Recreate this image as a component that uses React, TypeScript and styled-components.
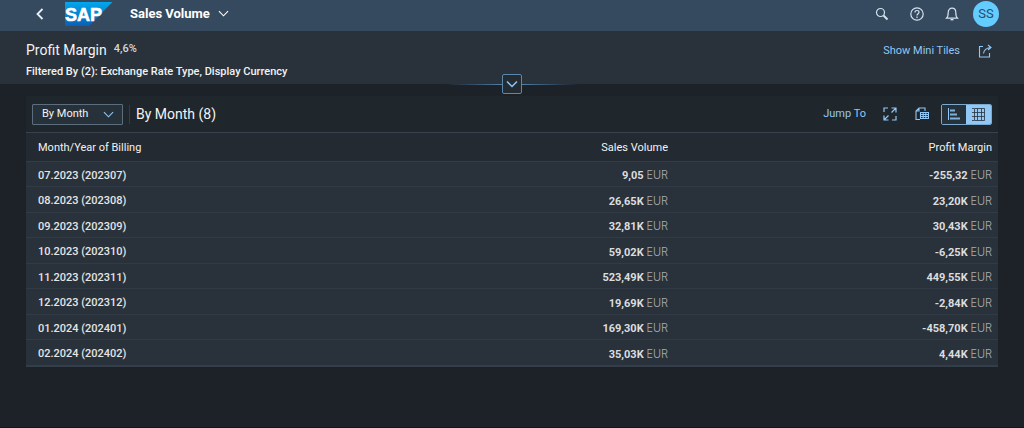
import React from 'react';
import styled, { createGlobalStyle } from 'styled-components';

const GlobalStyle = createGlobalStyle`
  *, *::before, *::after { box-sizing: border-box; }
  body {
    margin: 0;
    background: #1d2229;
    color: #f2f3f4;
    font-family: Roboto, "Liberation Sans", sans-serif;
    font-size: 11px;
    line-height: 16px;
  }
  button, select { font: inherit; color: inherit; margin: 0; padding: 0; border: 0; background: none; cursor: pointer; }
  svg { display: block; }
`;

const Page = styled.div`
  display: flex;
  flex-direction: column;
  min-height: 100vh;
  border-bottom: 1px solid #1b1218;
`;

const ShellBar = styled.header`
  display: flex;
  align-items: center;
  justify-content: space-between;
  height: 31px;
  padding: 0 25px 4px 32px;
  background: #354a5f;
`;

const ShellGroup = styled.div<{ $gap: number }>`
  display: flex;
  align-items: center;
  gap: ${(p) => p.$gap}px;
`;

const IconButton = styled.button<{ $color?: string }>`
  display: grid;
  place-items: center;
  width: 16px;
  height: 16px;
  color: ${(p) => p.$color ?? '#91c8f6'};
`;

const AppTitle = styled.button`
  display: flex;
  align-items: center;
  gap: 8px;
  font-size: 13px;
  font-weight: 700;
  color: #ffffff;
`;

const Avatar = styled.button`
  width: 26px;
  height: 26px;
  border-radius: 50%;
  background: #64cdff;
  color: #2c4a66;
  font-size: 13px;
`;

const PageHeader = styled.section`
  display: flex;
  align-items: flex-start;
  justify-content: space-between;
  height: 53px;
  padding: 10px 31px 0 26px;
  background: #29313a;
`;

const Heading = styled.h1`
  display: flex;
  gap: 7px;
  margin: 0;
  font-size: 14px;
  font-weight: 400;
  line-height: 18px;
`;

const Kpi = styled.span`
  font-size: 11px;
  font-weight: 500;
  line-height: 16px;
  color: #d5d7d9;
`;

const FilterText = styled.p`
  margin: 5px 0 0;
  font-weight: 500;
`;

const HeaderActions = styled.div`
  display: flex;
  align-items: center;
  gap: 17px;
  padding-top: 2px;
`;

const LinkButton = styled.button`
  color: #91c8f6;
`;

const ExpandStrip = styled.div`
  display: flex;
  align-items: center;
  justify-content: center;
  height: 20px;
  margin-top: -10px;
`;

const Glow = styled.span<{ $side: 'left' | 'right' }>`
  width: 56px;
  height: 1px;
  background: linear-gradient(to ${(p) => p.$side}, #4f7fa8, transparent);
`;

const ExpandButton = styled.button`
  display: grid;
  place-items: center;
  width: 20px;
  height: 20px;
  border: 1px solid #5b87ad;
  border-radius: 2px;
  background: #232b33;
  color: #91c8f6;
`;

const Panel = styled.main`
  margin: 2px 26px 0;
  background: #1f262c;
`;

const Toolbar = styled.div`
  display: flex;
  align-items: center;
  justify-content: space-between;
  height: 36px;
  padding: 0 6px;
`;

const ToolGroup = styled.div<{ $gap: number }>`
  display: flex;
  align-items: center;
  gap: ${(p) => p.$gap}px;
`;

const SelectBox = styled.label`
  display: grid;
  align-items: center;
  width: 91px;
  height: 21px;
  border: 1px solid #5c6d7e;
  border-radius: 1px;
  background: #27313a;
  color: #91c8f6;

  > * { grid-area: 1 / 1; }
  > svg { justify-self: end; margin-right: 8px; pointer-events: none; }
`;

const Select = styled.select`
  appearance: none;
  width: 100%;
  height: 19px;
  padding: 0 24px 0 9px;
  color: #f2f3f4;
`;

const Divider = styled.span`
  width: 1px;
  height: 19px;
  background: #343e49;
`;

const PanelTitle = styled.h2`
  margin: 0;
  font-size: 14px;
  font-weight: 400;
`;

const Segments = styled.div`
  display: flex;
  height: 21px;
  border: 1px solid #7ba9d0;
  border-radius: 2px;
  overflow: hidden;
`;

const Segment = styled.button<{ $active?: boolean }>`
  display: grid;
  place-items: center;
  width: ${(p) => (p.$active ? 25 : 24)}px;
  background: ${(p) => (p.$active ? '#91c8f6' : '#27313a')};
  color: ${(p) => (p.$active ? '#29313a' : '#91c8f6')};
`;

const Table = styled.table`
  width: 100%;
  height: 235px;
  border-collapse: separate;
  border-spacing: 0;
  table-layout: fixed;
  border-top: 1px solid #38424d;
  border-bottom: 2px solid #343e4a;
`;

const HeadCell = styled.th<{ $end?: boolean }>`
  height: 29px;
  padding: 1px 6px 0 12px;
  background: #232a31;
  border-bottom: 1px solid #323b46;
  font-weight: 400;
  text-align: ${(p) => (p.$end ? 'right' : 'left')};
`;

const Cell = styled.td<{ $end?: boolean }>`
  padding: 3px 6px 0 12px;
  background: #29313a;
  color: #e4e5e6;
  font-weight: 500;
  text-align: ${(p) => (p.$end ? 'right' : 'left')};

  tr + tr > & { border-top: 1px solid #313a45; }
`;

const Amount = styled.span`
  font-weight: 700;
  color: #dcdddf;
`;

const Unit = styled.span`
  font-family: Inter, Roboto, sans-serif;
  font-weight: 300;
  color: #a9aeb3;
`;

const ROWS: [string, string, string][] = [
  ['07.2023 (202307)', '9,05', '-255,32'],
  ['08.2023 (202308)', '26,65K', '23,20K'],
  ['09.2023 (202309)', '32,81K', '30,43K'],
  ['10.2023 (202310)', '59,02K', '-6,25K'],
  ['11.2023 (202311)', '523,49K', '449,55K'],
  ['12.2023 (202312)', '19,69K', '-2,84K'],
  ['01.2024 (202401)', '169,30K', '-458,70K'],
  ['02.2024 (202402)', '35,03K', '4,44K'],
];

const Chevron = ({ width = 11, stroke = 1.2 }: { width?: number; stroke?: number }) => (
  <svg width={width} height={width} viewBox="0 0 12 12" fill="none" stroke="currentColor" strokeWidth={stroke}>
    <path d="M1 3.5 6 8.5 11 3.5" />
  </svg>
);

const SapLogo = () => (
  <svg width="48" height="24" viewBox="0 0 48 24" role="img" aria-label="SAP">
    <defs>
      <linearGradient id="sap-blue" x1="0" y1="0" x2="0" y2="1">
        <stop offset="0" stopColor="#00a8ec" />
        <stop offset="1" stopColor="#0b5fb8" />
      </linearGradient>
    </defs>
    <path d="M0 0H47.5L24 24H0Z" fill="url(#sap-blue)" />
    <text x="0" y="18.5" fill="#fff" fontFamily="Liberation Sans, sans-serif" fontWeight="700" fontSize="18" stroke="#fff" strokeWidth="0.6">
      SAP
    </text>
  </svg>
);

const Value = ({ amount }: { amount: string }) => (
  <>
    <Amount>{amount}</Amount> <Unit>EUR</Unit>
  </>
);

export default function App() {
  return (
    <>
      <GlobalStyle />
      <Page>
        <ShellBar>
          <ShellGroup $gap={17}>
            <IconButton aria-label="Back" $color="#e6f1fa">
              <svg width="16" height="16" viewBox="0 0 16 16" fill="none" stroke="currentColor" strokeWidth="1.8">
                <path d="M10.5 3 5.5 8l5 5" />
              </svg>
            </IconButton>
            <SapLogo />
            <AppTitle>
              Sales Volume
              <Chevron />
            </AppTitle>
          </ShellGroup>
          <ShellGroup $gap={13}>
            <ShellGroup $gap={19}>
              <IconButton aria-label="Search" $color="#d3e2ee">
                <svg width="14" height="14" viewBox="0 0 14 14" fill="none" stroke="currentColor">
                  <circle cx="5.5" cy="5.5" r="4" strokeWidth="1.2" />
                  <path d="m8.5 8.5 4 4" strokeWidth="2" />
                </svg>
              </IconButton>
              <IconButton aria-label="Help" $color="#d3e2ee">
                <svg width="14" height="14" viewBox="0 0 14 14" fill="none" stroke="currentColor" strokeWidth="1.2">
                  <circle cx="7" cy="7" r="6.2" />
                  <path d="M5 5.5C5 4.2 5.9 3.5 7 3.5S9 4.2 9 5.3C9 6.7 7 6.7 7 8.5M7 9.6v1.3" />
                </svg>
              </IconButton>
              <IconButton aria-label="Notifications" $color="#d3e2ee">
                <svg width="14" height="14" viewBox="0 0 14 14" fill="none" stroke="currentColor" strokeWidth="1.2">
                  <path d="M1.5 11.2C3.2 9.8 3.2 8.5 3.2 5.500 3.2 2.8 4.8 1.2 7 1.2s3.8 1.6 3.8 4.3c0 3 0 4.3 1.7 5.7Z" />
                  <path d="M5.500 12.700h3" strokeWidth="1.4" />
                </svg>
              </IconButton>
            </ShellGroup>
            <Avatar aria-label="User menu SS">SS</Avatar>
          </ShellGroup>
        </ShellBar>

        <PageHeader>
          <div>
            <Heading>
              Profit Margin <Kpi>4,6%</Kpi>
            </Heading>
            <FilterText>Filtered By (2): Exchange Rate Type, Display Currency</FilterText>
          </div>
          <HeaderActions>
            <LinkButton>Show Mini Tiles</LinkButton>
            <IconButton aria-label="Share">
              <svg width="14" height="14" viewBox="0 0 14 14" fill="none" stroke="currentColor" strokeWidth="1.1">
                <path d="M5 2.5H1.5v10.500h10V9M5.500 9.500C6 6 8 4 12.500 3.500M10 1l3 2.500-3 2.500" />
              </svg>
            </IconButton>
          </HeaderActions>
        </PageHeader>

        <ExpandStrip>
          <Glow $side="left" />
          <ExpandButton aria-label="Expand header">
            <Chevron width={12} stroke={1.5} />
          </ExpandButton>
          <Glow $side="right" />
        </ExpandStrip>

        <Panel>
          <Toolbar>
            <ToolGroup $gap={6}>
              <SelectBox>
                <Select aria-label="View by" defaultValue="month">
                  <option value="month">By Month</option>
                </Select>
                <Chevron />
              </SelectBox>
              <Divider />
              <PanelTitle>By Month (8)</PanelTitle>
            </ToolGroup>
            <ToolGroup $gap={11}>
              <ToolGroup $gap={16}>
                <LinkButton>Jump To</LinkButton>
                <IconButton aria-label="Full screen">
                  <svg width="14" height="14" viewBox="0 0 14 14" fill="none" stroke="currentColor" strokeWidth="1.2">
                    <path d="M5 1H1v4M13 9v4H9M8.500 1H13v4.500M13 1 8.500 5.500M1 8.500V13h4.500M1 13l4.500-4.500" />
                  </svg>
                </IconButton>
                <IconButton aria-label="Export">
                  <svg width="14" height="14" viewBox="0 0 14 14" fill="none" stroke="currentColor" strokeWidth="1.100">
                    <path d="M10 4V1H4L1 4v8.500h4M4 1v3H1" />
                    <path d="M5.500 5.500h8v6h-8zM5.500 7.500h8M5.500 9.500h8M8.200 5.500v6M10.800 5.500v6" />
                  </svg>
                </IconButton>
              </ToolGroup>
              <Segments role="group" aria-label="View">
                <Segment aria-label="Chart view" aria-pressed="false">
                  <svg width="14" height="14" viewBox="0 0 14 14" fill="none" stroke="currentColor">
                    <path d="M1.500 1v12" />
                    <path d="M3 3.500h5M3 7.500h7M3 11.500h10" strokeWidth="2" strokeOpacity="0.85" />
                  </svg>
                </Segment>
                <Segment aria-label="Table view" aria-pressed="true" $active>
                  <svg width="15" height="15" viewBox="0 0 15 15" fill="none" stroke="currentColor" strokeOpacity="0.8">
                    <path d="M3.500 1.500h10v12h-10zM1 5.500h12.500M1 9.500h12.500M6.500 1.500v12M10.500 1.500v12M1 1.500h2M1 13.500h2" />
                  </svg>
                </Segment>
              </Segments>
            </ToolGroup>
          </Toolbar>
          <Table>
            <thead>
              <tr>
                <HeadCell scope="col">Month/Year of Billing</HeadCell>
                <HeadCell scope="col" $end>Sales Volume</HeadCell>
                <HeadCell scope="col" $end>Profit Margin</HeadCell>
              </tr>
            </thead>
            <tbody>
              {ROWS.map(([month, sales, margin]) => (
                <tr key={month}>
                  <Cell>{month}</Cell>
                  <Cell $end><Value amount={sales} /></Cell>
                  <Cell $end><Value amount={margin} /></Cell>
                </tr>
              ))}
            </tbody>
          </Table>
        </Panel>
      </Page>
    </>
  );
}
